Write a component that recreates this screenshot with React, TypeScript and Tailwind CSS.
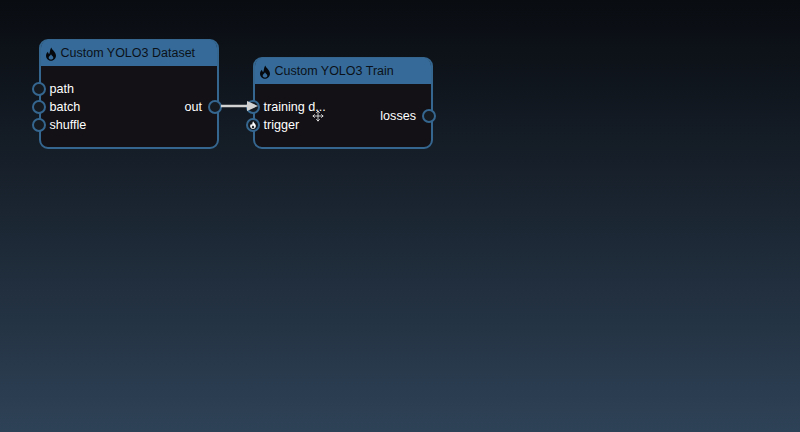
import type { ReactNode } from 'react'
import { Move } from 'lucide-react'

const font = { fontFamily: '"Liberation Sans", Arial, sans-serif' }

function Flame({ size, className }: { size: number; className: string }) {
  return (
    <svg width={size} height={size} viewBox="0 0 24 24" className={`shrink-0 ${className}`}>
      <path
        fill="currentColor"
        fillRule="evenodd"
        d="M12.5 1C13.5 5 19.5 8 20.5 14C21 19 17 23.5 12 23.5C7 23.5 3 19 3.5 14C3.8 11.5 5 9.5 6.8 8C7 10 7.8 11.5 9.3 11.5C10.5 8 10 4 12.5 1ZM12 12.5C11 14.8 8 16 8 18.3C8 20.3 9.8 21.3 12 21.3C14.2 21.3 16 20.3 16 18.3C16 16 13 14.8 12 12.5Z"
      />
    </svg>
  )
}

function Port({ side, children }: { side: 'in' | 'out'; children?: ReactNode }) {
  return (
    <span
      className={`absolute top-1/2 -translate-y-1/2 flex items-center justify-center w-[14px] h-[14px] rounded-full border-2 border-[#35668f] bg-[#151a21] ${
        side === 'in' ? 'left-[-9px]' : 'right-[-5px]'
      }`}
    >
      {children}
    </span>
  )
}

function Row({ label, side, children }: { label: string; side: 'in' | 'out'; children?: ReactNode }) {
  return (
    <div className={`relative h-[18px] flex items-center text-[12.6px] text-white ${side === 'out' ? 'justify-end pr-[15px]' : 'pl-[8.5px]'}`}>
      <Port side={side}>{children}</Port>
      {label}
    </div>
  )
}

function Node({ title, className, children }: { title: string; className: string; children: ReactNode }) {
  return (
    <div className={`absolute w-[180px] rounded-[9px] border-2 border-[#35668f] bg-[#131115] flex flex-col ${className}`}>
      <div className="h-[26px] -mt-[1px] flex items-center gap-[3px] pl-[2.5px] pt-[1px] rounded-t-[8px] bg-[#366b99] text-[#0b1118] text-[12.5px]">
        <Flame size={14} className="text-[#05090e] mt-[1px]" />
        <span>{title}</span>
      </div>
      {children}
    </div>
  )
}

export default function App() {
  return (
    <div className="relative w-[800px] h-[432px] overflow-hidden bg-gradient-to-b from-[#090c11] to-[#2e4257]" style={font}>
      <Node title="Custom YOLO3 Dataset" className="left-[39px] top-[39px] h-[110px]">
        <div className="flex justify-between items-center pt-[14px]">
          <div className="flex-1">
            <Row label="path" side="in" />
            <Row label="batch" side="in" />
            <Row label="shuffle" side="in" />
          </div>
          <div className="flex-1">
            <Row label="out" side="out" />
          </div>
        </div>
      </Node>

      <Node title="Custom YOLO3 Train" className="left-[253px] top-[57px] h-[92px]">
        <div className="flex justify-between items-center pt-[14px]">
          <div className="flex-1">
            <Row label="training d..." side="in" />
            <Row label="trigger" side="in">
              <Flame size={8} className="text-white" />
            </Row>
          </div>
          <div className="flex-1">
            <Row label="losses" side="out" />
          </div>
        </div>
      </Node>

      <svg className="absolute left-0 top-0" width="800" height="432">
        <line x1="221" y1="106" x2="250" y2="106" stroke="#d2d2d2" strokeWidth="2.5" />
        <path d="M247 101 L258 106 L247 111 Z" fill="#d2d2d2" />
      </svg>

      <Move size={12} strokeWidth={1.5} className="absolute left-[312px] top-[110px] text-white" />
    </div>
  )
}
